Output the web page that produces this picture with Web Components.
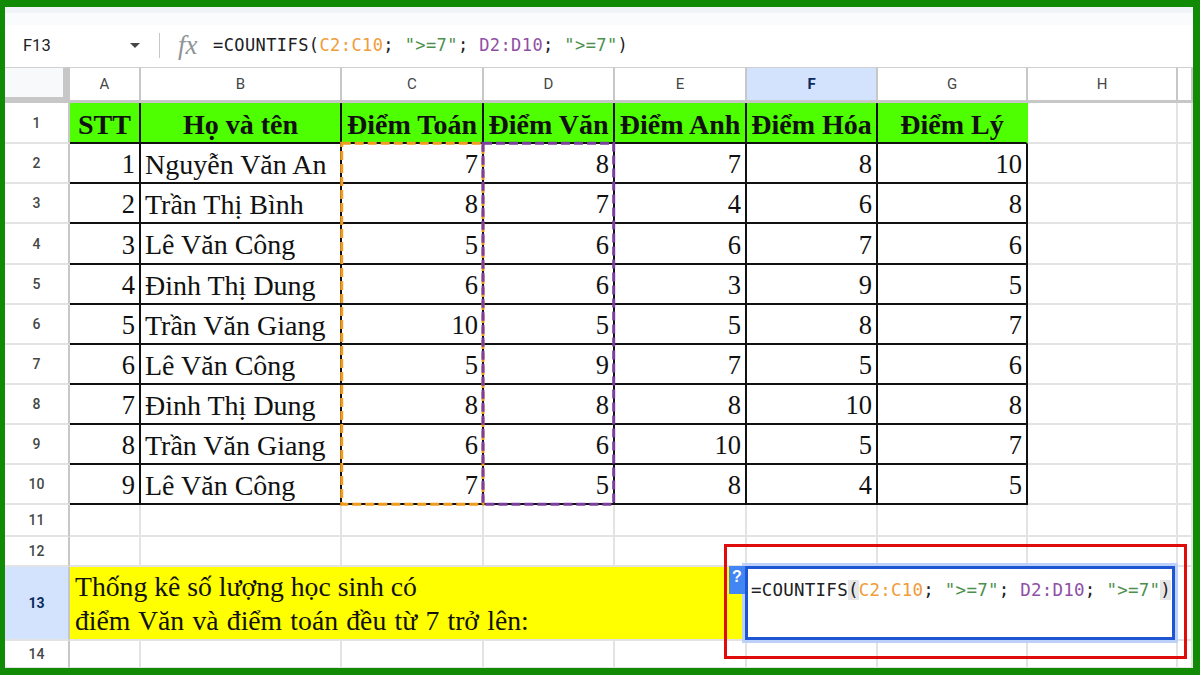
<!DOCTYPE html>
<html>
<head>
<meta charset="utf-8">
<title>COUNTIFS</title>
<style>
  html, body { margin: 0; padding: 0; background: #fff; }
</style>
</head>
<body>
<sheet-app>
  <formula-bar slot="bar" cell="F13">
    <formula-text></formula-text>
  </formula-bar>
  <sheet-grid slot="grid"></sheet-grid>
</sheet-app>

<script>
/**
 * FormulaText - the coloured formula, used in the bar and in the cell editor
 */
class FormulaText extends HTMLElement {
  constructor() {
    super();
    this.attachShadow({ mode: 'open' });
  }

  connectedCallback() {
    // no whitespace before the spans: the host is white-space: pre
    this.shadowRoot.innerHTML = `<style>
        :host {
          display: block;
          font-family: "DejaVu Sans Mono", "Liberation Mono", monospace;
          font-size: var(--formula-size, 17px);
          letter-spacing: var(--formula-spacing, 0.41px);
          line-height: 20px;
          color: #202124;
          white-space: pre;
        }
        .c { color: #f09c3a; }
        .d { color: #8f4fa5; }
        .s { color: #4d8f4d; }
        .p { background: var(--paren-bg, transparent); }
      </style><span>=COUNTIFS</span><span class="p">(</span><span class="c">C2:C10</span>; <span class="s">"&gt;=7"</span>; <span class="d">D2:D10</span>; <span class="s">"&gt;=7"</span><span class="p">)</span>`;
  }
}
customElements.define('formula-text', FormulaText);

/**
 * FormulaBar - name box, dropdown arrow, fx mark and the slotted formula
 */
class FormulaBar extends HTMLElement {
  constructor() {
    super();
    this.attachShadow({ mode: 'open' });
  }

  connectedCallback() {
    this.shadowRoot.innerHTML = `
      <style>
        :host {
          display: flex;
          align-items: center;
          height: 42px;
          background: #fff;
          color: #202124;
          box-sizing: border-box;
          padding: 0 0 2px 18px;
          font-family: Roboto, "Liberation Sans", sans-serif;
        }
        .name { width: 107px; font-size: 16.5px; }
        .arrow {
          width: 0;
          height: 0;
          border-left: 5.5px solid transparent;
          border-right: 5.5px solid transparent;
          border-top: 5px solid #444746;
        }
        .sep { width: 1px; height: 25px; background: #c7c7c7; margin: 0 18px 0 19px; }
        .fx {
          width: 35px;
          font: italic 400 27px "Liberation Serif", serif;
          color: #8f9499;
        }
      </style>
      <span class="name">${this.getAttribute('cell')}</span>
      <span class="arrow"></span>
      <span class="sep"></span>
      <span class="fx">fx</span>
      <slot></slot>`;
  }
}
customElements.define('formula-bar', FormulaBar);

/**
 * SheetCell - one grid cell; kind picks the look, text comes through the slot
 */
class SheetCell extends HTMLElement {
  constructor() {
    super();
    this.attachShadow({ mode: 'open' });
    this.shadowRoot.innerHTML = `
      <style>
        :host {
          display: flex;
          align-items: center;
          box-sizing: border-box;
          min-width: 0;
          border-right: 2px solid #e3e3e3;
          border-bottom: 2px solid #e3e3e3;
          font-family: "Liberation Serif", serif;
          font-size: 26.5px;
          color: #111;
          white-space: nowrap;
          overflow: hidden;
        }
        :host([kind="corner"]) {
          background: #f8f9fa;
          border-top: 1px solid #d0d0d0;
          border-right: 7px solid #c7c7c7;
          border-bottom: 6px solid #c7c7c7;
        }
        :host([kind="col"]), :host([kind="row"]) {
          justify-content: center;
          font-family: Roboto, "Liberation Sans", sans-serif;
          font-size: 14px;
          font-weight: 500;
          color: #444746;
          background: #fff;
          border-color: #c7c7c7;
        }
        :host([kind="col"]) {
          border-top: 1px solid #d0d0d0;
          border-bottom-width: 3px;
          font-size: 15px;
          font-weight: 400;
        }
        :host([kind="row"]) { border-bottom-color: #e3e3e3; }
        :host([active]) {
          background: #d3e3fd;
          color: #0b2a5e;
          font-weight: 700;
        }
        :host([kind="head"]) {
          justify-content: center;
          background: #4dff00;
          padding-top: 5px;
          font-size: 28px;
          font-weight: 700;
          border-right-color: #111;
          border-bottom-color: #111;
        }
        :host([kind="head"][last]) { border-right-color: #4dff00; }
        :host([kind="num"]), :host([kind="name"]) {
          padding-top: 3px;
          border-right-color: #111;
          border-bottom-color: #111;
        }
        :host([kind="num"]) { justify-content: flex-end; padding-right: 4px; }
        :host([kind="name"]) { padding-left: 4px; font-size: 28px; }
        :host([kind="note"]) {
          background: #ffff00;
          padding: 2px 0 0 5px;
          font-size: 27.7px;
          line-height: 34px;
        }
        :host([kind="note"]) ::slotted(div) { white-space: pre; }
      </style>
      <slot></slot>`;
  }
}
customElements.define('sheet-cell', SheetCell);

/**
 * CellEditor - the open editor over F13, with its "?" tab
 */
class CellEditor extends HTMLElement {
  constructor() {
    super();
    this.attachShadow({ mode: 'open' });
  }

  connectedCallback() {
    this.shadowRoot.innerHTML = `
      <style>
        :host {
          display: block;
          position: absolute;
          left: 740px;
          top: 499px;
          width: 430px;
          height: 74px;
          box-sizing: border-box;
          border: 3px solid #1f55d2;
          outline: 3px solid #bcd0fa;
          background: #fff;
          padding: 11px 0 0 3px;
          --formula-size: 17.5px;
          --formula-spacing: 0.23px;
          --paren-bg: #e6e6e6;
        }
        .tip {
          position: absolute;
          left: -19px;
          top: -3px;
          width: 16px;
          height: 28px;
          background: #4285f4;
          color: #fff;
          font: 700 16px/22px "Liberation Sans", sans-serif;
          text-align: center;
        }
      </style>
      <span class="tip">?</span>
      <slot></slot>`;
  }
}
customElements.define('cell-editor', CellEditor);

/**
 * SheetGrid - builds the cells from the data and lays the overlays on top
 */
class SheetGrid extends HTMLElement {
  constructor() {
    super();
    this.attachShadow({ mode: 'open' });
  }

  connectedCallback() {
    const cols = ['A', 'B', 'C', 'D', 'E', 'F', 'G', 'H', ''];
    const head = ['STT', 'Họ và tên', 'Điểm Toán', 'Điểm Văn', 'Điểm Anh', 'Điểm Hóa', 'Điểm Lý'];
    const rows = [
      [1, 'Nguyễn Văn An', 7, 8, 7, 8, 10],
      [2, 'Trần Thị Bình', 8, 7, 4, 6, 8],
      [3, 'Lê Văn Công', 5, 6, 6, 7, 6],
      [4, 'Đinh Thị Dung', 6, 6, 3, 9, 5],
      [5, 'Trần Văn Giang', 10, 5, 5, 8, 7],
      [6, 'Lê Văn Công', 5, 9, 7, 5, 6],
      [7, 'Đinh Thị Dung', 8, 8, 8, 10, 8],
      [8, 'Trần Văn Giang', 6, 6, 10, 5, 7],
      [9, 'Lê Văn Công', 7, 5, 8, 4, 5]
    ];

    const cell = (kind, text, extra = '') =>
      `<sheet-cell kind="${kind}" ${extra}>${text}</sheet-cell>`;
    const blanks = (n) => cell('blank', '').repeat(n);

    let html = cell('corner', '');
    cols.forEach((c) => { html += cell('col', c, c === 'F' ? 'active' : ''); });

    html += cell('row', '1');
    head.forEach((h, i) => { html += cell('head', h, i === 6 ? 'last' : ''); });
    html += blanks(2);

    rows.forEach((r, i) => {
      html += cell('row', i + 2);
      r.forEach((v, j) => { html += cell(j === 1 ? 'name' : 'num', v); });
      html += blanks(2);
    });

    html += cell('row', '11') + blanks(9);
    html += cell('row', '12') + blanks(9);
    html += cell('row', '13', 'active');
    html += cell('note', '<div>Thống kê số lượng học sinh có\n<span style="word-spacing: 1.3px">điểm Văn và điểm toán đều từ 7 trở lên:</span></div>', 'style="grid-column: span 5"');
    html += blanks(4);
    html += cell('row', '14') + blanks(9);

    this.shadowRoot.innerHTML = `
      <style>
        :host {
          display: grid;
          position: relative;
          grid-template-columns: 65px 71px 201px 142px 131px 132px 131px 150px 150px 15px;
          grid-template-rows: 36px 41px 40px 40px 41px 40px 40px 40px 40px 40px 40px 32px 30px 74px 28px;
          overflow: hidden;
        }
        svg { position: absolute; left: 0; top: 0; pointer-events: none; }
        .red {
          position: absolute;
          left: 719px;
          top: 477px;
          width: 463px;
          height: 115px;
          box-sizing: border-box;
          border: 3px solid #e00b0b;
        }
        .dash { fill: none; stroke-width: 3; stroke-dasharray: 9 4; }
      </style>
      ${html}
      <svg width="1188" height="602">
        <rect class="dash" x="336.7" y="76.3" width="141.3" height="361" stroke="#f09c1e"/>
        <rect class="dash" x="478" y="76.3" width="130.7" height="361" stroke="#7b3f9e"/>
      </svg>
      <cell-editor><formula-text></formula-text></cell-editor>
      <div class="red"></div>`;
  }
}
customElements.define('sheet-grid', SheetGrid);

/**
 * SheetApp - green frame, toolbar strips, then the bar and the grid in flow
 */
class SheetApp extends HTMLElement {
  constructor() {
    super();
    this.attachShadow({ mode: 'open' });
    this.shadowRoot.innerHTML = `
      <style>
        :host {
          display: block;
          width: 1200px;
          height: 675px;
          box-sizing: border-box;
          border-style: solid;
          border-color: #118a06;
          border-width: 7px 7px 7px 5px;
          background: #fff;
          overflow: hidden;
        }
        .strip1 { height: 6px; background: #f0f4f9; }
        .strip2 { height: 12px; background: #f9fbfd; }
      </style>
      <div class="strip1"></div>
      <div class="strip2"></div>
      <slot name="bar"></slot>
      <slot name="grid"></slot>`;
  }
}
customElements.define('sheet-app', SheetApp);
</script>
</body>
</html>
